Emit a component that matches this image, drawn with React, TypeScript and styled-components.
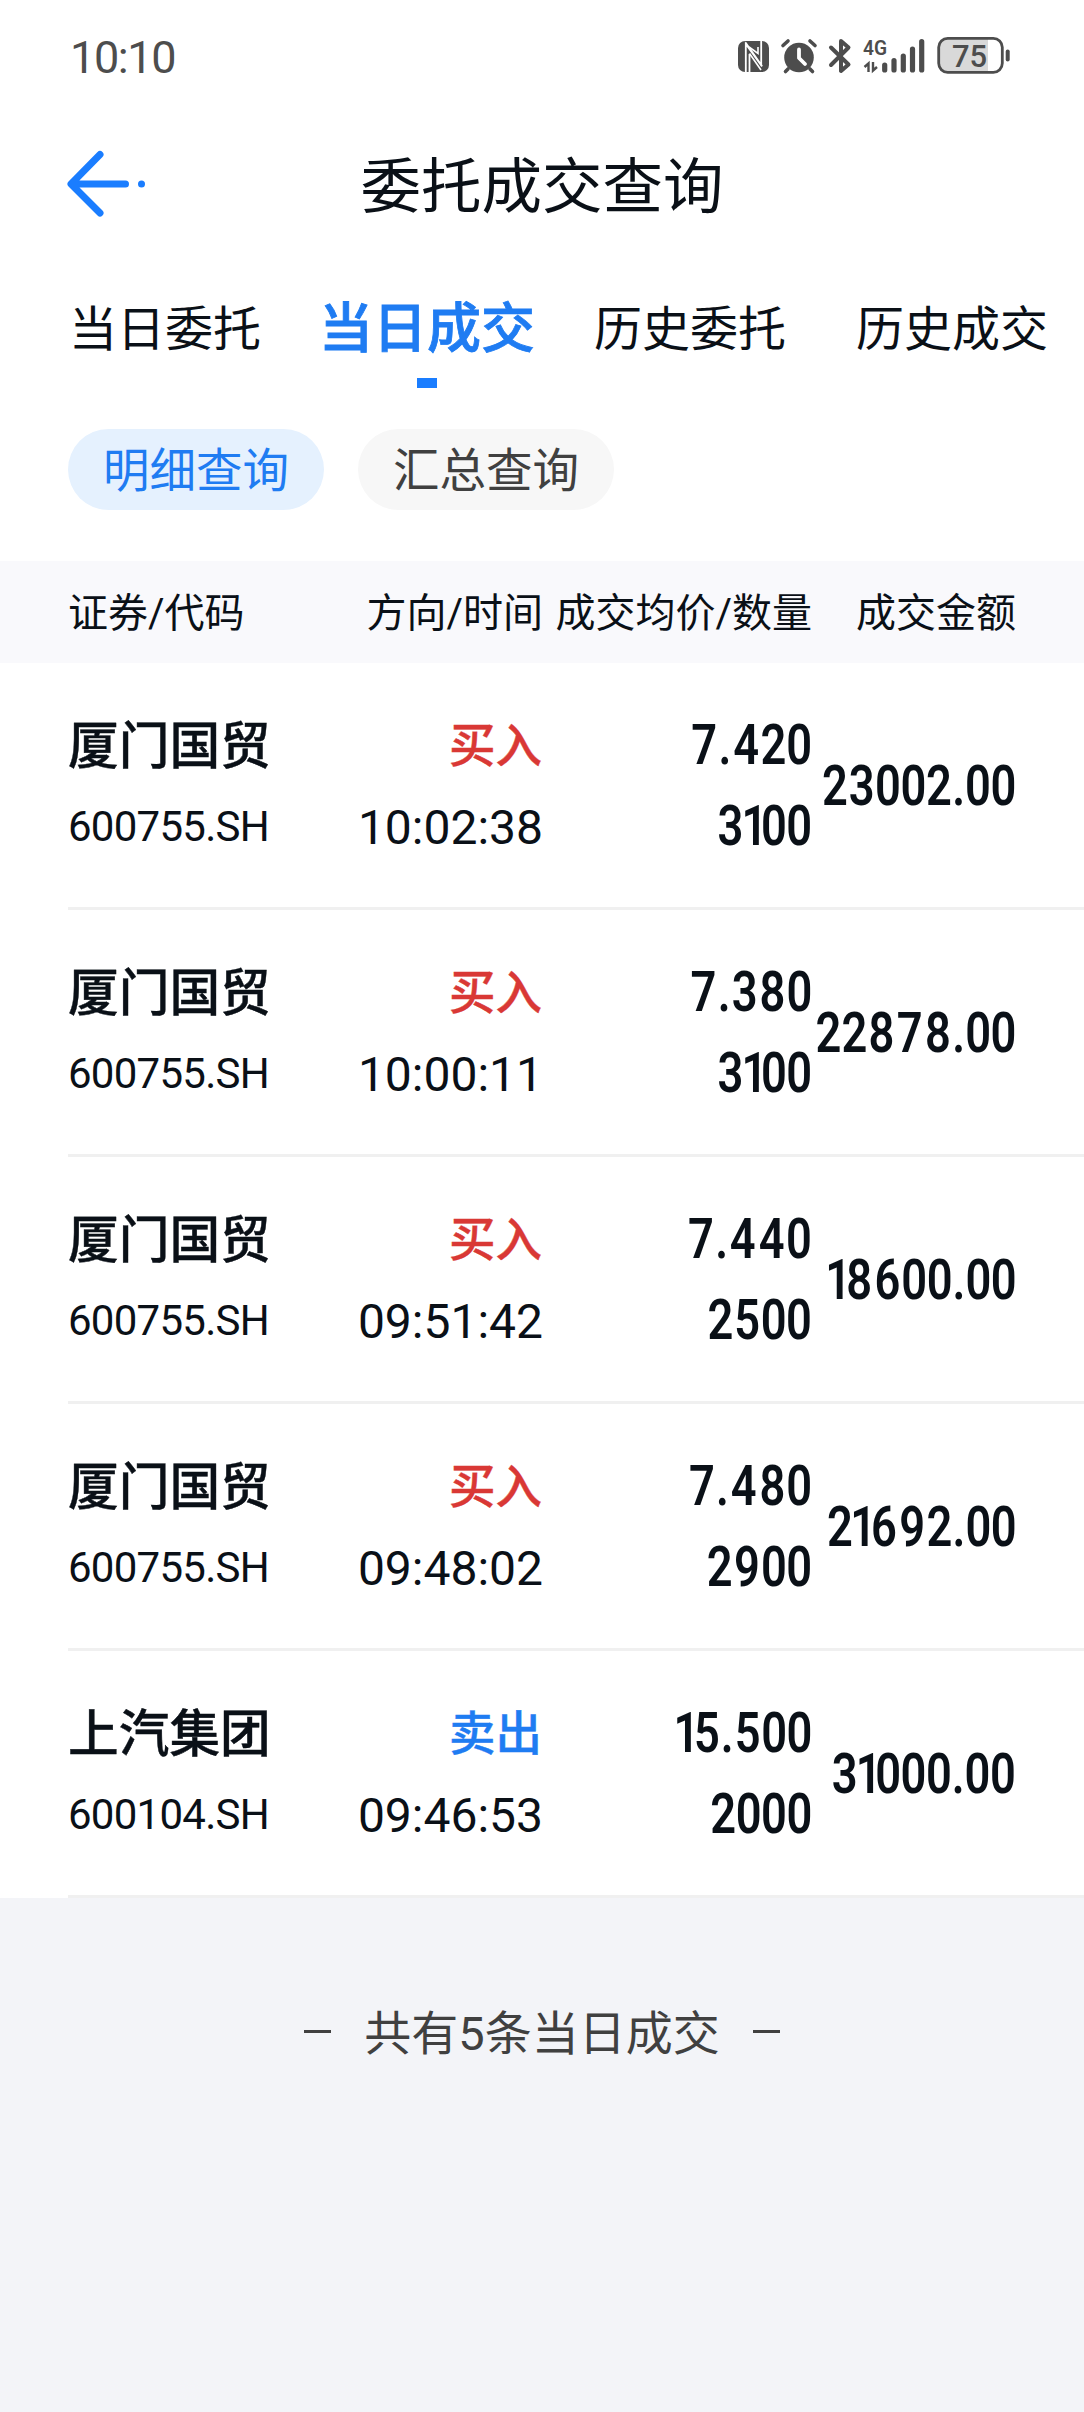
import React from 'react';
import styled, { createGlobalStyle } from 'styled-components';

const BLUE = '#1f7cf2';
const RED = '#d93835';
const INK = '#0a1017';

const GlobalStyle = createGlobalStyle`
  *, *::before, *::after { box-sizing: border-box; }
  body {
    margin: 0;
    background: #f3f4f8;
    color: ${INK};
    font-family: Roboto, 'Noto Sans CJK SC', sans-serif;
  }
`;

const Screen = styled.div`
  width: 1084px;
  min-height: 2412px;
  display: flex;
  flex-direction: column;
  overflow: hidden;
  background: #f3f4f8;
`;

const StatusBar = styled.div`
  display: flex;
  justify-content: space-between;
  height: 114px;
  padding: 0 72px 0 70px;
  background: #fff;
  color: #4d4d4d;
`;

const Clock = styled.div`
  font-size: 45px;
  font-weight: 450;
  line-height: 116px;
  letter-spacing: -1.4px;
`;

const StatusIcons = styled.svg`
  display: block;
  width: 276px;
  height: 114px;
`;

const NavBar = styled.header`
  display: grid;
  grid-template-columns: 150px 1fr 150px;
  align-items: start;
  height: 142px;
  background: #fff;
`;

const BackButton = styled.button`
  border: 0;
  padding: 31px 0 0 64px;
  background: none;
  svg { display: block; }
`;

const Title = styled.h1`
  margin: 0;
  text-align: center;
  font-size: 60.5px;
  line-height: 148px;
  font-weight: 400;
`;

const Tabs = styled.nav`
  display: grid;
  grid-template-columns: 250px 275px 262px auto;
  align-items: start;
  height: 173px;
  padding: 22px 0 0 69px;
  background: #fff;
`;

const Tab = styled.div<{ $active?: boolean }>`
  display: flex;
  flex-direction: column;
  align-items: center;
  justify-self: start;
  height: 110px;
  font-size: ${p => (p.$active ? 54 : 48)}px;
  font-weight: ${p => (p.$active ? 500 : 400)};
  -webkit-text-stroke: ${p => (p.$active ? '0.8px' : '0')};
  line-height: 103px;
  color: ${p => (p.$active ? BLUE : INK)};
`;

const TabMark = styled.i`
  width: 20px;
  height: 10px;
  margin-top: -3px;
  flex: none;
  background: #1a7dff;
`;

const Pills = styled.div`
  display: flex;
  gap: 34px;
  height: 132px;
  padding: 0 68px;
  background: #fff;
`;

const Pill = styled.div<{ $active?: boolean }>`
  width: 256px;
  height: 81px;
  border-radius: 41px;
  text-align: center;
  font-size: 46.5px;
  line-height: 84px;
  color: ${p => (p.$active ? BLUE : '#404040')};
  background: ${p => (p.$active ? '#e5f1fe' : '#f7f7f7')};
`;

const columns = `
  display: grid;
  grid-template-columns: 212px 263px 269px 204px;
`;

const TableHead = styled.div`
  ${columns}
  height: 102px;
  padding-left: 68px;
  background: #f9f9fc;
  font-size: 40px;
  line-height: 106px;
  white-space: nowrap;
`;

const HeadCell = styled.div<{ $start?: boolean }>`
  display: flex;
  justify-content: ${p => (p.$start ? 'flex-start' : 'flex-end')};
`;

const List = styled.div`
  padding-left: 68px;
  background: #fff;
`;

const Row = styled.div`
  ${columns}
  height: 247px;
  padding-top: 43px;
  border-bottom: 3px solid #f0f0f0;
  white-space: nowrap;
`;

const Cell = styled.div<{ $start?: boolean; $figures?: boolean }>`
  display: flex;
  flex-direction: column;
  align-items: ${p => (p.$start ? 'flex-start' : 'flex-end')};
  margin-top: ${p => (p.$figures ? '-1px' : '0')};
`;

const Name = styled.div`
  font-size: 50.7px;
  font-weight: 500;
  line-height: 81px;
  -webkit-text-stroke: 0.4px;
`;

const Code = styled.div`
  font-size: 42px;
  line-height: 80px;
  letter-spacing: -0.75px;
`;

const Side = styled.div<{ $sell?: boolean }>`
  font-size: 46.5px;
  font-weight: 500;
  line-height: 81px;
  padding-right: 1px;
  -webkit-text-stroke: 0.4px;
  color: ${p => (p.$sell ? BLUE : RED)};
`;

const Time = styled.div`
  font-size: 48px;
  line-height: 81px;
`;

const Figure = styled.div<{ $middle?: boolean }>`
  font-size: 55.5px;
  font-weight: 600;
  line-height: 81px;
  margin-top: ${p => (p.$middle ? '41px' : '0')};
  transform: scaleX(0.815);
  transform-origin: right center;
`;

const Digit = styled.span<{ $gap: number }>`
  letter-spacing: ${p => p.$gap}px;
`;

const Footer = styled.footer`
  display: flex;
  align-items: center;
  justify-content: center;
  gap: 33px;
  padding-top: 93px;
  font-size: 47px;
  line-height: 81px;
  color: #404040;
`;

const FooterText = styled.span`
  padding-top: 2px;
  margin-bottom: -2px;
`;

const Dash = styled.i`
  width: 27px;
  height: 3px;
  background: #404040;
`;

type Trade = {
  name: string;
  code: string;
  side: '买入' | '卖出';
  time: string;
  price: string;
  qty: string;
  amount: string;
};

const trades: Trade[] = [
  { name: '厦门国贸', code: '600755.SH', side: '买入', time: '10:02:38', price: '7.420', qty: '3100', amount: '23002.00' },
  { name: '厦门国贸', code: '600755.SH', side: '买入', time: '10:00:11', price: '7.380', qty: '3100', amount: '22878.00' },
  { name: '厦门国贸', code: '600755.SH', side: '买入', time: '09:51:42', price: '7.440', qty: '2500', amount: '18600.00' },
  { name: '厦门国贸', code: '600755.SH', side: '买入', time: '09:48:02', price: '7.480', qty: '2900', amount: '21692.00' },
  { name: '上汽集团', code: '600104.SH', side: '卖出', time: '09:46:53', price: '15.500', qty: '2000', amount: '31000.00' },
];

/* Extra space on the left and right of each numeral, so that the figures are set proportionally. */
const kern: Record<string, [number, number]> = {
  '0': [-0.3, -0.3],
  '1': [-3.2, -7.6],
  '2': [0, 0],
  '3': [1, 1],
  '4': [1.9, 1.9],
  '5': [1, 1],
  '6': [1.4, 1.4],
  '7': [1.3, 1.3],
  '8': [1.6, 1.6],
  '9': [1.6, 1.6],
  '.': [0.3, 0.3],
};

const Digits = ({ value, middle }: { value: string; middle?: boolean }) => (
  <Figure $middle={middle}>
    {value.split('').map((ch, i) => (
      <Digit key={i} $gap={kern[ch][1] + (kern[value[i + 1]]?.[0] ?? 0)}>{ch}</Digit>
    ))}
  </Figure>
);

const Status = () => (
  <StatusIcons viewBox="736 0 276 114" fill="none" stroke="#4d4d4d">
    {/* NFC */}
    <rect x="738" y="41" width="31" height="31" rx="7" fill="#4d4d4d" stroke="none" />
    <path d="M745.8 72V44L762 66.500M745.500 42.500L762 66M761.200 41V66M749.500 72V54" stroke="#fff" strokeWidth="1.8" />
    <path d="M749.500 53.500L761 70M749 47L758 53.500V47" stroke="#fff" strokeWidth="1.600" />
    {/* alarm */}
    <circle cx="799" cy="57.500" r="14.800" fill="#4d4d4d" stroke="none" />
    <path d="M783 45.500L788 41M815 45.500L810 41M788 69L785.500 71.500M810 69L812.500 71.500" strokeWidth="3.600" strokeLinecap="round" />
    <path d="M799 49.500V58L805 64" stroke="#fff" strokeWidth="3.800" strokeLinecap="round" strokeLinejoin="round" />
    {/* bluetooth */}
    <path d="M831 47.500L848.500 64.500L841 71V41L848.500 47.500L831 65" strokeWidth="4" strokeLinecap="round" strokeLinejoin="round" />
    {/* cellular */}
    <text x="863" y="54.500" fontSize="21" fontWeight="600" textLength="24" lengthAdjust="spacingAndGlyphs" fill="#4d4d4d" stroke="none">4G</text>
    <path d="M868.500 72V63.500L864.500 67M873 62V70.500L877 67" strokeWidth="2.400" />
    <path d="M884.700 65V70M894 60.500V70M903.300 56V70M912.500 49V70M921.700 41.500V70" strokeWidth="5.200" strokeLinecap="round" />
    {/* battery */}
    <path d="M947 39H988V72H947Q939.500 72 939.500 64V47Q939.500 39 947 39Z" fill="#d9d9d9" stroke="none" />
    <rect x="938.700" y="38.300" width="63.600" height="34" rx="9" strokeWidth="2.800" />
    <path d="M1007.700 51.500V59.500" strokeWidth="4" strokeLinecap="round" />
    <text x="952" y="66.500" fontSize="31" fontWeight="500" textLength="35" fill="#4d4d4d" stroke="none">75</text>
  </StatusIcons>
);

export default function App() {
  return (
    <Screen>
      <GlobalStyle />
      <StatusBar>
        <Clock>10:10</Clock>
        <Status />
      </StatusBar>
      <NavBar>
        <BackButton aria-label="返回">
          <svg width="84" height="76" viewBox="64 145 84 76" fill="none" stroke="#1a7dff" strokeWidth="7" strokeLinecap="round" strokeLinejoin="round">
            <path d="M100 154.500L71 184L100 213M73 184H125.500" />
            <circle cx="141.500" cy="184" r="3.500" fill="#1a7dff" stroke="none" />
          </svg>
        </BackButton>
        <Title>委托成交查询</Title>
      </NavBar>
      <Tabs>
        <Tab>当日委托</Tab>
        <Tab $active>
          当日成交
          <TabMark />
        </Tab>
        <Tab>历史委托</Tab>
        <Tab>历史成交</Tab>
      </Tabs>
      <Pills>
        <Pill $active>明细查询</Pill>
        <Pill>汇总查询</Pill>
      </Pills>
      <TableHead>
        <HeadCell $start>证券/代码</HeadCell>
        <HeadCell>方向/时间</HeadCell>
        <HeadCell>成交均价/数量</HeadCell>
        <HeadCell>成交金额</HeadCell>
      </TableHead>
      <List>
        {trades.map(t => (
          <Row key={t.time}>
            <Cell $start>
              <Name>{t.name}</Name>
              <Code>{t.code}</Code>
            </Cell>
            <Cell>
              <Side $sell={t.side === '卖出'}>{t.side}</Side>
              <Time>{t.time}</Time>
            </Cell>
            <Cell $figures>
              <Digits value={t.price} />
              <Digits value={t.qty} />
            </Cell>
            <Cell $figures>
              <Digits value={t.amount} middle />
            </Cell>
          </Row>
        ))}
      </List>
      <Footer>
        <Dash />
        <FooterText>共有5条当日成交</FooterText>
        <Dash />
      </Footer>
    </Screen>
  );
}
